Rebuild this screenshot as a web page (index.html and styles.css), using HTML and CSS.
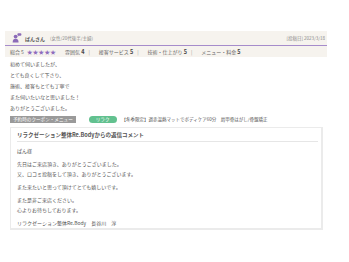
FILE: index.html
```html
<!DOCTYPE html>
<html lang="ja">
<head>
<meta charset="utf-8">
<link rel="stylesheet" href="styles.css">
</head>
<body>
<div class="review">
  <div class="head">
    <div class="who">
      <svg class="icon" width="10" height="10" viewBox="0 0 10 10">
        <circle cx="3.6" cy="3.6" r="1.9" fill="#8c6bb8"/>
        <path d="M0.6 9.6 C0.6 6.6 1.8 5.8 3.6 5.8 C5.4 5.8 6.6 6.6 6.6 9.6 Z" fill="#8c6bb8"/>
        <rect x="5.4" y="0.2" width="4" height="2.6" rx="1" fill="#8c6bb8"/>
        <path d="M6.2 2.6 L5.6 3.6 L7.2 2.7 Z" fill="#8c6bb8"/>
      </svg>
      <span class="name">ぱんさん</span>
      <span class="attr">(女性/20代後半/主婦)</span>
    </div>
    <span class="date">[投稿日] 2023/3/18</span>
  </div>
  <div class="rates">
    <span class="rate">総合 5 <span class="stars">★★★★★</span></span>
    <span class="rate sep">雰囲気 <b>4</b></span>
    <span class="rate sep">接客サービス <b>5</b></span>
    <span class="rate sep">技術・仕上がり <b>5</b></span>
    <span class="rate last">メニュー・料金 <b>5</b></span>
  </div>
  <div class="body">
    <p>初めて伺いましたが、<br>とても良くして下さり、<br>施術、接客もとても丁寧で<br>また伺いたいなと思いました！<br>ありがとうございました。</p>
  </div>
  <div class="coupon">
    <span class="label">予約時のクーポン・メニュー</span>
    <span class="tag">リラク</span>
    <span class="menu">【冬季限定】週赤温熱マットでボディケア60分　肩甲骨はがし/骨盤矯正</span>
  </div>
  <div class="reply">
    <div class="reply-title">リラクゼーション整体Re.Bodyからの返信コメント</div>
    <div class="reply-body">
      <p>ぱん様</p>
      <p>先日はご来店頂き、ありがとうございました。<br>又、口コミ投稿をして頂き、ありがとうございます。</p>
      <p>また来たいと思って頂けてとても嬉しいです。</p>
      <p>また是非ご来店ください。<br>心よりお待ちしております。</p>
      <p>リラクゼーション整体Re.Body　長谷川　淳</p>
    </div>
  </div>
</div>
</body>
</html>
```
FILE: styles.css
```css
html, body {
  margin: 0;
  padding: 0;
  background: #ffffff;
}
body {
  font-family: "Noto Sans CJK JP", "Noto Sans", sans-serif;
  color: #555555;
}
.review {
  padding: 31px 22px 0 5px;
}
.head {
  display: flex;
  align-items: center;
  justify-content: space-between;
  height: 14px;
  padding: 0 2px 0 7px;
  background: #f6f3ee;
  border-bottom: 1px solid #a68ccb;
}
.who {
  display: flex;
  align-items: center;
}
.icon {
  display: block;
  margin-right: 3px;
}
.name {
  font-size: 5px;
  font-weight: bold;
  color: #555;
  margin-right: 5px;
}
.attr, .date {
  font-size: 4.5px;
  color: #888;
}
.rates {
  display: flex;
  align-items: center;
  height: 11px;
  padding-left: 5px;
  background: #f6f3ee;
  font-size: 5px;
  color: #666;
}
.rate b {
  color: #444;
  font-size: 5.5px;
}
.rate {
  margin-right: 9px;
}
.rate.sep::after {
  content: "|";
  color: #999;
  margin-left: 4px;
}
.stars {
  color: #8e6cbd;
  font-size: 5.5px;
  letter-spacing: 0.3px;
  margin-left: 2px;
}
.body {
  padding: 1px 5px 0 5px;
}
.body p {
  margin: 0;
  font-size: 5px;
  line-height: 11px;
  color: #555;
}
.coupon {
  display: flex;
  align-items: center;
  height: 8px;
  margin-top: 2px;
  padding-left: 5px;
  font-size: 4.6px;
}
.label {
  background: #9a9a9a;
  color: #fff;
  height: 7px;
  line-height: 7px;
  padding: 0 3px;
  margin-right: 13px;
}
.tag {
  background: #62c18f;
  color: #fff;
  height: 7px;
  line-height: 7px;
  padding: 0 7px;
  border-radius: 4px;
  margin-right: 5px;
}
.menu {
  color: #555;
  font-size: 4.5px;
}
.reply {
  margin: 4px 4px 0 5px;
  border: 1px solid #ebebeb;
  border-right-width: 2px;
  border-bottom-width: 2px;
  padding: 3px 3px 0 6px;
}
.reply-title {
  font-size: 5.5px;
  font-weight: bold;
  line-height: 8px;
  color: #555;
  padding-bottom: 2px;
  border-bottom: 1px solid #e6e6e6;
}
.reply-body p {
  margin: 3px 0 0 0;
  font-size: 5px;
  line-height: 10px;
  color: #555;
}
.reply-body p:first-child {
  margin-top: 4px;
}
```
